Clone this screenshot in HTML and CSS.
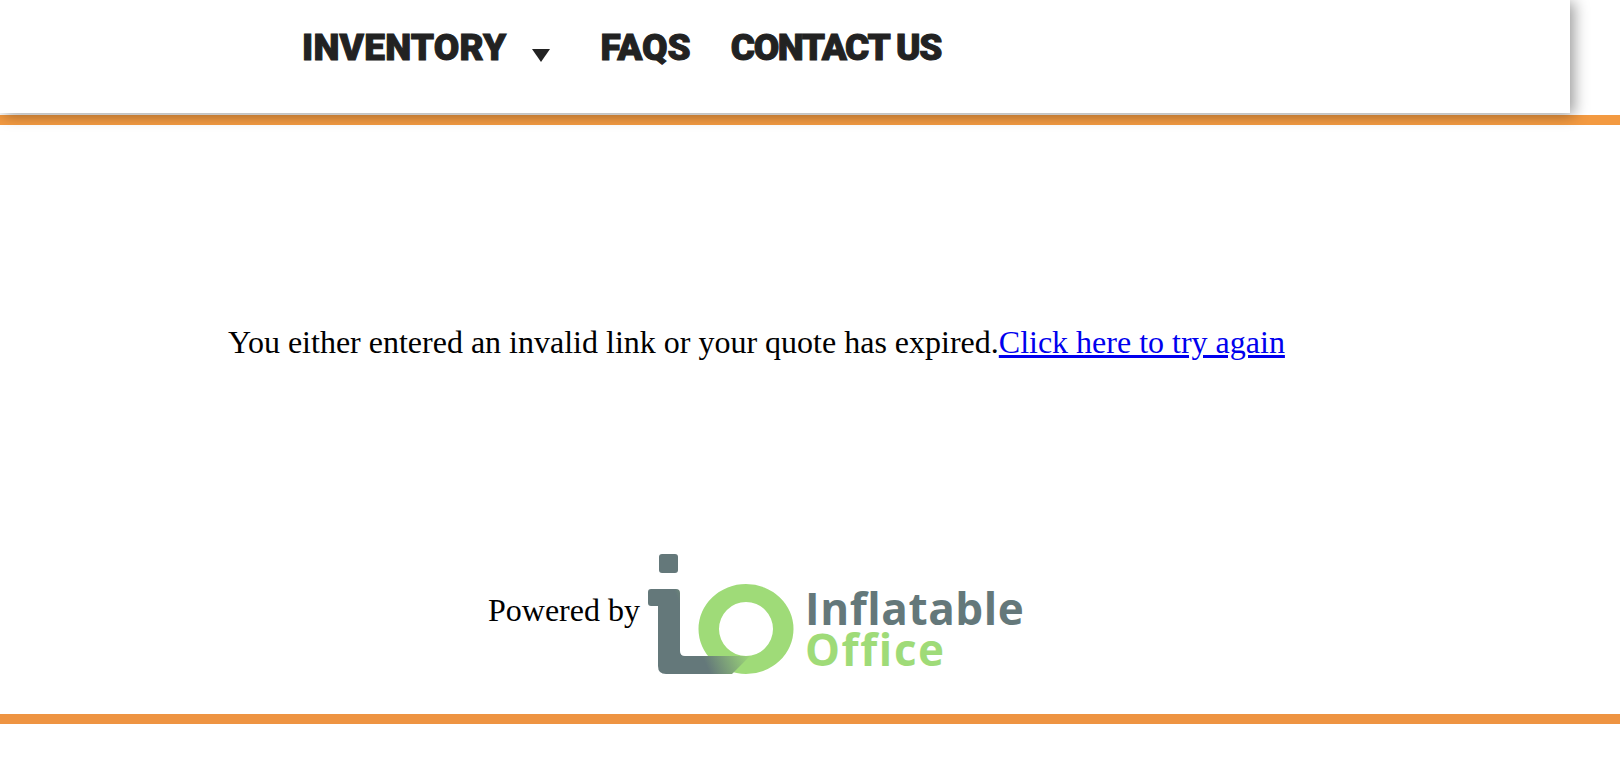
FILE: index.html

```html
<!DOCTYPE html>
<html lang="en">
<head>
    <meta charset="UTF-8">
    <meta name="viewport" content="width=device-width, initial-scale=1.0">
    <title>Quote expired</title>
    <link rel="stylesheet" href="styles.css">
</head>
<body>

<header class="site-header">
    <nav class="main-nav">
        <a href="#" class="nav-link nav-dropdown">Inventory<span class="nav-caret"></span></a>
        <a href="#" class="nav-link">FAQs</a>
        <a href="#" class="nav-link nav-contact">Contact Us</a>
    </nav>
</header>
<div class="orange-bar"></div>

<main class="message">
    You either entered an invalid link or your quote has expired.<a href="#">Click here to try again</a>
</main>

<section class="powered">
    <span class="powered-label">Powered by</span>
    <svg class="io-mark" width="148" height="122" viewBox="0 0 148 122">
        <defs>
            <linearGradient id="ioFade" x1="62" y1="121" x2="104" y2="103" gradientUnits="userSpaceOnUse">
                <stop offset="0" stop-color="#64787a"/>
                <stop offset="1" stop-color="#9fdb78"/>
            </linearGradient>
        </defs>
        <rect x="11" y="1" width="19" height="19" rx="3" fill="#64787a"/>
        <path fill="#9fdb78" fill-rule="evenodd" d="M98 31a47.5 45 0 1 1 0 90a47.5 45 0 1 1 0-90zM98 49a27 27 0 1 0 0 54a27 27 0 1 0 0-54z"/>
        <path fill="url(#ioFade)" d="M3 36H28Q32 36 32 40V98Q32 103 37 103H102L84 121H18Q10 121 10 113V53H3Q0 53 0 50V39Q0 36 3 36Z"/>
    </svg>
    <div class="io-name">
        <div class="io-first">Inflatable</div>
        <div class="io-second">Office</div>
    </div>
</section>

<div class="orange-bar footer-bar"></div>

</body>
</html>
```

FILE: styles.css

```css
body {
    margin: 0;
    background-color: white;
    font-family: "Liberation Serif", "Times New Roman", serif;
    color: black;
}
.site-header {
    position: relative;
    z-index: 2;
    width: 1570px;
    height: 113px;
    background-color: white;
    box-shadow: 4px 2px 14px rgba(0, 0, 0, 0.4);
}
.main-nav {
    display: flex;
    align-items: flex-start;
    padding: 26px 0 0 302px;
}
.nav-link {
    font-family: Roboto, sans-serif;
    font-weight: 900;
    font-size: 37px;
    line-height: 44px;
    letter-spacing: 0;
    text-transform: uppercase;
    text-decoration: none;
    color: #222222;
    -webkit-text-stroke: 1px #222222;
    margin-right: 40px;
}
.nav-dropdown {
    display: flex;
    margin-right: 50px;
    letter-spacing: 0.2px;
}
.nav-contact {
    letter-spacing: -1.4px;
}
.nav-caret {
    width: 0;
    height: 0;
    margin: 23px 0 0 26px;
    border-left: 9px solid transparent;
    border-right: 9px solid transparent;
    border-top: 13px solid #222222;
}
.orange-bar {
    height: 10px;
    margin-top: 2px;
    background-color: #f39a41;
}
.message {
    padding: 199px 0 0 228px;
    font-size: 32px;
    line-height: 36px;
}
.powered {
    display: flex;
    align-items: flex-start;
    margin-top: 193px;
    padding-left: 488px;
}
.powered-label {
    font-size: 32px;
    line-height: 36px;
    margin: 39px 8px 0 0;
}
.io-name {
    margin: 35px 0 0 9px;
    font-family: "Open Sans", sans-serif;
    font-weight: 700;
    font-size: 44px;
    line-height: 41px;
}
.io-first {
    color: #64787a;
    letter-spacing: 0.6px;
}
.io-second {
    color: #9fdb78;
    letter-spacing: 1.6px;
}
.footer-bar {
    margin-top: 39px;
    background-color: #ee9442;
}
```
